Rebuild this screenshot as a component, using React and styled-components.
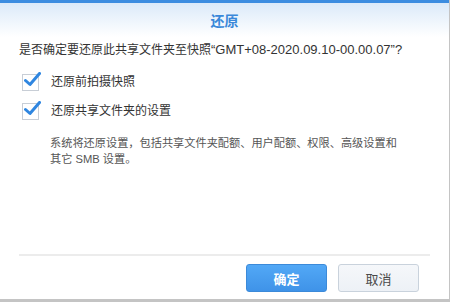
import React from "react";
import styled, { createGlobalStyle } from "styled-components";

const Global = createGlobalStyle`
  html, body { margin: 0; padding: 0; background: #ffffff; }
  body { font-family: "Liberation Sans", "Noto Sans CJK SC", sans-serif; }
`;

const Page = styled.div`
  width: 450px;
  height: 302px;
  background: #c4c4c4;
  display: flex;
  align-items: flex-start;
`;

const Dialog = styled.div`
  width: 449px;
  height: 299px;
  background: #ffffff;
  border-top: 3px solid #3c8de0;
  box-sizing: border-box;
  display: flex;
  flex-direction: column;
`;

const Header = styled.div`
  height: 34px;
  background: linear-gradient(#dbeaf9, #ffffff);
  display: flex;
  align-items: center;
  justify-content: center;
  color: #3a88d9;
  font-size: 14px;
  font-weight: bold;
`;

const Body = styled.div`
  flex: 1;
  padding: 4px 19px 0;
  display: flex;
  flex-direction: column;
  color: #333333;
`;

const Question = styled.div`
  font-size: 12px;
  line-height: 18px;
  white-space: nowrap;
`;

const Latin = styled.span`
  font-size: 13px;
`;

const CheckRow = styled.label`
  display: flex;
  align-items: center;
  gap: 12px;
  margin-left: 3px;
  margin-top: ${(p) => p.$top}px;
  font-size: 12px;
  line-height: 18px;
  color: #333;
`;

const Box = styled.span`
  position: relative;
  width: 15px;
  height: 15px;
  border: 1px solid #c8ced6;
  background: #fff;
  flex: none;
  svg { position: absolute; left: 1px; top: -3px; }
`;

const Desc = styled.div`
  margin: 15px 0 0 31px;
  font-size: 11.2px;
  line-height: 16px;
  color: #555;
`;

const Footer = styled.div`
  border-top: 2px solid #ececec;
  margin: 0 19px;
  height: 45px;
  box-sizing: border-box;
  display: flex;
  justify-content: flex-end;
  align-items: flex-start;
  padding: 8px 11px 0 0;
  gap: 11px;
`;

const Button = styled.button`
  width: 81px;
  height: 28px;
  border-radius: 3px;
  font-family: "Liberation Sans", "Noto Sans CJK SC", sans-serif;
  font-size: 13px;
  cursor: pointer;
  border: 1px solid ${(p) => (p.$primary ? "#3c8ad9" : "#c9d2dc")};
  background: ${(p) =>
    p.$primary
      ? "linear-gradient(#52a8f6, #3f93e8)"
      : "linear-gradient(#f5f7fa, #edf1f6)"};
  color: ${(p) => (p.$primary ? "#ffffff" : "#4a4a4a")};
  font-weight: ${(p) => (p.$primary ? "bold" : "normal")};
`;

const Check = () => (
  <svg width="17" height="15" viewBox="0 0 17 15">
    <path d="M1.5 8.5 L6 12.5 L15.5 1.5" fill="none" stroke="#2f86e0" strokeWidth="3" strokeLinecap="round" strokeLinejoin="round" />
  </svg>
);

export default function App() {
  return (
    <>
      <Global />
      <Page>
        <Dialog>
          <Header>还原</Header>
          <Body>
            <Question>
              是否确定要还原此共享文件夹至快照<Latin>“GMT+08-2020.09.10-00.00.07”?</Latin>
            </Question>
            <CheckRow $top={14}>
              <Box><Check /></Box>
              还原前拍摄快照
            </CheckRow>
            <CheckRow $top={11}>
              <Box><Check /></Box>
              还原共享文件夹的设置
            </CheckRow>
            <Desc>
              系统将还原设置，包括共享文件夹配额、用户配额、权限、高级设置和
              <br />
              其它 SMB 设置。
            </Desc>
          </Body>
          <Footer>
            <Button $primary>确定</Button>
            <Button>取消</Button>
          </Footer>
        </Dialog>
      </Page>
    </>
  );
}
